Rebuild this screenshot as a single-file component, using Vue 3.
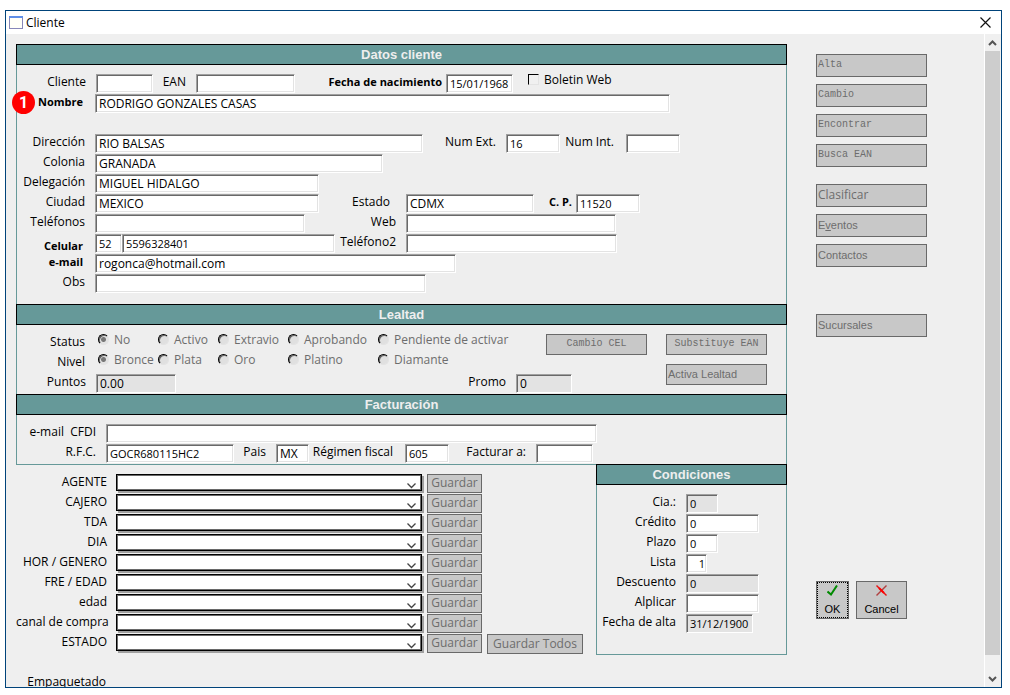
<script setup>
import { ref } from 'vue'

const customerRows = ref([
  { cls: 'r-id', fields: [
    { id: 'cliente', label: 'Cliente', value: '' },
    { id: 'ean', label: 'EAN', value: '' },
    { id: 'nacimiento', label: 'Fecha de nacimiento', value: '15/01/1968', bold: true, near: true, num: true },
  ], check: 'Boletin Web' },
  { cls: 'r-name', badge: '1', fields: [{ id: 'nombre', label: 'Nombre', value: 'RODRIGO GONZALES CASAS', bold: true }] },
  { cls: 'r-blank', fields: [] },
  { cls: 'r-street', fields: [
    { id: 'direccion', label: 'Dirección', value: 'RIO BALSAS' },
    { id: 'numext', label: 'Num Ext.', value: '16', num: true },
    { id: 'numint', label: 'Num Int.', value: '', mid: true },
  ] },
  { cls: 'r-colony', fields: [{ id: 'colonia', label: 'Colonia', value: 'GRANADA' }] },
  { cls: 'r-city', fields: [{ id: 'delegacion', label: 'Delegación', value: 'MIGUEL HIDALGO' }] },
  { cls: 'r-city', fields: [
    { id: 'ciudad', label: 'Ciudad', value: 'MEXICO' },
    { id: 'estado', label: 'Estado', value: 'CDMX', far: true },
    { id: 'cp', label: 'C. P.', value: '11520', bold: true, near: true, num: true },
  ] },
  { cls: 'r-phone', fields: [
    { id: 'telefonos', label: 'Teléfonos', value: '' },
    { id: 'web', label: 'Web', value: '' },
  ] },
  { cls: 'r-cell', fields: [
    { id: 'lada', label: 'Celular', value: '52', bold: true, low: true, num: true },
    { id: 'celular', aria: 'Número celular', value: '5596328401', num: true },
    { id: 'telefono2', label: 'Teléfono2', value: '' },
  ] },
  { cls: 'r-mail', fields: [{ id: 'email', label: 'e-mail', value: 'rogonca@hotmail.com', bold: true }] },
  { cls: 'r-obs', fields: [{ id: 'obs', label: 'Obs', value: '' }] },
])

const radioRows = [
  { name: 'status', label: 'Status', options: ['No', 'Activo', 'Extravio', 'Aprobando', 'Pendiente de activar'] },
  { name: 'nivel', label: 'Nivel', options: ['Bronce', 'Plata', 'Oro', 'Platino', 'Diamante'] },
]

const billingRows = ref([
  { cls: 'r-cfdi', fields: [{ id: 'cfdi', label: 'e-mail  CFDI', value: '' }] },
  { cls: 'r-rfc', fields: [
    { id: 'rfc', label: 'R.F.C.', value: 'GOCR680115HC2', num: true },
    { id: 'pais', label: 'Pais', value: 'MX' },
    { id: 'regimen', label: 'Régimen fiscal', value: '605', mid: true, num: true },
    { id: 'facturar', label: 'Facturar a:', value: '' },
  ] },
])

const conditions = ref([
  { id: 'cia', label: 'Cia.:', value: '0', size: 'w-s', locked: true },
  { id: 'credito', label: 'Crédito', value: '0', size: 'w-l' },
  { id: 'plazo', label: 'Plazo', value: '0', size: 'w-s' },
  { id: 'lista', label: 'Lista', value: '1', size: 'w-xs' },
  { id: 'descuento', label: 'Descuento', value: '0', size: 'w-l', locked: true },
  { id: 'alplicar', label: 'Alplicar', value: '', size: 'w-l' },
  { id: 'alta', label: 'Fecha de alta', value: '31/12/1900', size: 'w-m', locked: true },
])

const categories = ['AGENTE', 'CAJERO', 'TDA', 'DIA', 'HOR / GENERO', 'FRE / EDAD', 'edad', 'canal de compra', 'ESTADO']
</script>

<template>
  <div class="window">
    <header class="titlebar">
      <svg class="app-icon" width="14" height="13" viewBox="0 0 14 13" aria-hidden="true">
        <rect x="0.5" y="0.5" width="13" height="12" fill="#fffff8" stroke="#8787b8" />
        <path d="M0 1h14" stroke="#5f8fe8" stroke-width="2" />
      </svg>
      <h1>Cliente</h1>
      <button class="close" aria-label="Cerrar">
        <svg width="11" height="11" viewBox="0 0 11 11"><path d="M0.5 0.5l10 10M10.5 0.5l-10 10" stroke="#111" stroke-width="1.2" fill="none" /></svg>
      </button>
    </header>

    <div class="content">
      <main class="form">
        <section class="panel">
          <h2>Datos cliente</h2>
          <div class="body customer">
            <div v-for="(row, i) in customerRows" :key="i" class="row" :class="row.cls">
              <template v-for="f in row.fields" :key="f.id">
                <label v-if="f.label" :for="f.id" :class="{ bold: f.bold, near: f.near, mid: f.mid, far: f.far, low: f.low }">{{ f.label }}</label>
                <input :id="f.id" v-model="f.value" type="text" :aria-label="f.aria" :class="{ num: f.num }">
              </template>
              <label v-if="row.check" class="check"><input type="checkbox">{{ row.check }}</label>
              <span v-if="row.badge" class="badge">{{ row.badge }}</span>
            </div>
          </div>
        </section>

        <section class="panel">
          <h2>Lealtad</h2>
          <div class="body loyalty">
            <div class="levels">
              <div v-for="row in radioRows" :key="row.name" class="row r-radio" role="radiogroup" :aria-label="row.label">
                <span class="caption">{{ row.label }}</span>
                <label v-for="(o, i) in row.options" :key="o" class="radio">
                  <input type="radio" :name="row.name" :checked="i === 0" disabled>{{ o }}
                </label>
              </div>
            </div>
            <button class="btn mono change" disabled>Cambio CEL</button>
            <div class="side-actions">
              <button class="btn mono" disabled>Substituye EAN</button>
              <button class="btn sans left" disabled>Activa Lealtad</button>
            </div>
            <div class="row r-points">
              <label for="puntos">Puntos</label>
              <input id="puntos" type="text" value="0.00" readonly class="locked">
              <label for="promo">Promo</label>
              <input id="promo" type="text" value="0" readonly class="locked">
            </div>
          </div>
        </section>

        <section class="panel closed">
          <h2>Facturación</h2>
          <div class="body">
            <div v-for="row in billingRows" :key="row.cls" class="row" :class="row.cls">
              <template v-for="f in row.fields" :key="f.id">
                <label :for="f.id" :class="{ mid: f.mid }">{{ f.label }}</label>
                <input :id="f.id" v-model="f.value" type="text" :class="{ num: f.num }">
              </template>
            </div>
          </div>
        </section>

        <div class="lower">
          <div class="categories">
            <div v-for="(c, i) in categories" :key="c" class="row r-cat">
              <label :for="'cat' + i">{{ c }}</label>
              <span class="combo">
                <select :id="'cat' + i"><option></option></select>
                <svg width="9" height="6" viewBox="0 0 9 6" aria-hidden="true"><path d="M0.5 0.5l4 4 4-4" fill="none" stroke="#444" stroke-width="1.3" /></svg>
              </span>
              <button class="btn" disabled>Guardar</button>
              <button v-if="i === categories.length - 1" class="btn all" disabled>Guardar Todos</button>
            </div>
            <div class="row r-pack"><span class="caption">Empaquetado</span></div>
          </div>

          <section class="panel closed conditions">
            <h2>Condiciones</h2>
            <div class="body">
              <div v-for="f in conditions" :key="f.id" class="row r-cond">
                <label :for="f.id">{{ f.label }}</label>
                <input :id="f.id" v-model="f.value" type="text" class="num" :readonly="f.locked" :class="[f.size, { locked: f.locked }]">
              </div>
            </div>
          </section>
        </div>
      </main>

      <aside class="actions">
        <div class="group">
          <button class="btn mono left" disabled>Alta</button>
          <button class="btn mono left" disabled>Cambio</button>
          <button class="btn mono left" disabled>Encontrar</button>
          <button class="btn mono left" disabled>Busca EAN</button>
        </div>
        <div class="group second">
          <button class="btn left" disabled>Clasificar</button>
          <button class="btn sans left" disabled>E<u>v</u>entos</button>
          <button class="btn sans left" disabled>Contactos</button>
        </div>
        <div class="group third">
          <button class="btn sans left" disabled>Sucursales</button>
        </div>
        <div class="confirm">
          <button class="btn sans ok">
            <svg width="11" height="11" viewBox="0 0 11 11" aria-hidden="true"><path d="M0.5 6.5l3.5 3L10 0.5" fill="none" stroke="#008a00" stroke-width="2" /></svg>
            OK
          </button>
          <button class="btn sans cancel">
            <svg width="11" height="11" viewBox="0 0 11 11" aria-hidden="true"><path d="M0.5 0.5l10 10" stroke="#e81010" stroke-width="1.4" /><path d="M10.5 0.5l-10 10" stroke="#b04040" stroke-width="1.4" /><path d="M3 3l5 5" stroke="#f00" stroke-width="2" /></svg>
            Cancel
          </button>
        </div>
      </aside>

      <div class="scrollbar">
        <button aria-label="Subir"><svg width="9" height="6" viewBox="0 0 9 6"><path d="M1 5l3.5-3.5L8 5" fill="none" stroke="#555" stroke-width="2" /></svg></button>
        <div class="thumb"></div>
        <button class="down" aria-label="Bajar"><svg width="9" height="6" viewBox="0 0 9 6"><path d="M1 1l3.5 3.5L8 1" fill="none" stroke="#555" stroke-width="2" /></svg></button>
      </div>
    </div>
  </div>
</template>

<style>
body {
  background: #fff;
}
</style>

<style scoped>
* {
  box-sizing: border-box;
}
.window {
  display: flex;
  flex-direction: column;
  height: calc(100vh - 17px);
  margin: 10px 8px 7px 5px;
  border: 1px solid #00437a;
  background: #efefef;
  color: #000;
  font: 12px/16px "Open Sans", "Noto Sans", sans-serif;
  overflow: hidden;
}
button, input, select {
  margin: 0;
  font: inherit;
  color: inherit;
}
.titlebar {
  display: flex;
  flex: none;
  align-items: center;
  height: 23px;
  padding: 0 10px 0 3px;
  background: #fff;
}
h1 {
  margin: 0 auto 0 3px;
  font-size: 12px;
  font-weight: 400;
}
.close {
  display: flex;
  padding: 0;
  border: 0;
  background: none;
}
.content {
  display: flex;
  flex: 1;
  min-height: 0;
}
.form {
  flex: 1;
  min-width: 0;
  padding: 10px 0 0 10px;
}
.panel {
  border: solid #669999;
  border-width: 0 1px;
  background: #eee;
}
.closed {
  border-bottom-width: 1px;
}
h2 {
  height: 21px;
  margin: 0 -1px;
  border: 1px solid #000;
  background: #669999;
  color: #eee;
  font: bold 13px/19px "Liberation Sans", Arial, sans-serif;
  text-align: center;
}
.body {
  padding-top: 9px;
}
.customer {
  padding-bottom: 10px;
}
.row {
  display: grid;
  position: relative;
  height: 20px;
  align-items: start;
}
label, .caption {
  padding-right: 10px;
  text-align: right;
  white-space: pre;
}
.bold {
  padding-right: 12px;
  font-size: 11px;
  font-weight: 700;
}
.mid {
  padding-right: 12px;
}
.far {
  padding-right: 16px;
}
.near {
  padding-right: 4px;
}
.low {
  align-self: end;
}
input[type="text"] {
  width: 100%;
  min-width: 0;
  height: 19px;
  padding: 0 1px 0 3px;
  border: 1px solid;
  border-color: #a0a0a0 #fff #fff #a0a0a0;
  border-radius: 0;
  background: #fff;
  box-shadow: inset 1px 1px #696969, inset -1px -1px #e3e3e3;
  outline: none;
}
input[type="text"].num {
  font-size: 11px;
}
input[type="text"].locked {
  background: #e3e3e3;
}
.r-id { grid-template-columns: 79px 57px 43px 99px 151px 67px auto; }
.r-name { grid-template-columns: 78px 575px; }
.r-street { grid-template-columns: 78px 328px 83px 54px 66px 54px; }
.r-colony { grid-template-columns: 78px 288px; }
.r-city { grid-template-columns: 78px 224px 87px 128px 42px 64px; }
.r-phone { grid-template-columns: 78px 210px 101px 210px; }
.r-cell { grid-template-columns: 78px 27px 213px 71px 211px; }
.r-mail { grid-template-columns: 78px 361px; }
.r-obs { grid-template-columns: 78px 331px; }
.r-radio { grid-template-columns: 81px 60px 60px 70px 90px auto; }
.r-points { grid-template-columns: 79px 80px 340px 56px; }
.r-cfdi { grid-template-columns: 89px 491px; }
.r-rfc { grid-template-columns: 89px 128px 42px 33px 96px 44px 87px 57px; }
.r-cond { grid-template-columns: 89px 1fr; }
.r-cat { grid-template-columns: 95px 306px 55px 96px; column-gap: 5px; }
.r-pack { grid-template-columns: 100px; margin-top: 20px; }
.r-cat label { padding-right: 4px; }
.r-radio .caption { padding-right: 13px; }

.check {
  display: flex;
  gap: 5px;
  padding-left: 15px;
  line-height: 12px;
}
.check input {
  width: 11px;
  height: 11px;
  appearance: none;
  border: 1px solid;
  border-color: #000 #e3e3e3 #e3e3e3 #000;
  background: #f0f0f0;
}
.badge {
  position: absolute;
  top: -3px;
  left: -5px;
  width: 23px;
  height: 23px;
  border-radius: 50%;
  background: #f00;
  color: #fff;
  font: bold 16px/23px Roboto, "Liberation Sans", sans-serif;
  text-align: center;
}
.radio {
  display: flex;
  gap: 5px;
  padding: 0;
  color: #6d6d6d;
  line-height: 12px;
}
.radio input {
  width: 11px;
  height: 11px;
  appearance: none;
  border: 1px solid;
  border-color: #000 #e3e3e3 #e3e3e3 #000;
  border-radius: 50%;
  background: #e0e0e0;
  box-shadow: inset 1px 1px #696969;
}
.radio input:checked {
  background: radial-gradient(circle, #777 0 2px, #e3e3e3 3px);
}
.loyalty {
  display: grid;
  grid-template: 40px 20px / 1fr 101px 101px;
  column-gap: 19px;
  padding-right: 19px;
}
.levels {
  grid-area: 1 / 1;
  min-width: 0;
}
.change {
  grid-area: 1 / 2;
}
.side-actions {
  display: grid;
  grid-area: 1 / 3 / 3 / 4;
  align-content: start;
  gap: 9px;
}
.r-points {
  grid-area: 2 / 1 / 3 / 3;
}
.btn {
  height: 21px;
  padding: 0 1px 1px;
  border: 1px solid #696969;
  border-radius: 0;
  background: #c8c8c8;
  color: #6d6d6d;
  line-height: 14px;
  white-space: nowrap;
}
.mono {
  font-family: "Liberation Mono", monospace;
  font-size: 10px;
}
.sans {
  padding-bottom: 2px;
  font-family: "Liberation Sans", Arial, sans-serif;
  font-size: 11px;
}
.left {
  text-align: left;
}
.lower {
  display: flex;
  align-items: flex-start;
}
.categories {
  flex: 1;
  min-width: 0;
  padding-top: 9px;
}
.r-cat .btn {
  height: 19px;
}
.r-cat .all {
  height: 20px;
}
.combo {
  position: relative;
  height: 17px;
  border: 1px solid #000;
  box-shadow: 2px 2px #a0a0a0;
}
.combo select {
  display: block;
  width: 100%;
  height: 15px;
  padding: 0;
  appearance: none;
  border: 1px solid #696969;
  border-radius: 0;
  background: #fff;
}
.combo svg {
  position: absolute;
  right: 5px;
  bottom: 1px;
}
.conditions {
  width: 191px;
  margin-top: -1px;
}
.conditions .body {
  padding-bottom: 20px;
}
.w-xs { max-width: 21px; text-align: right; }
.w-s { max-width: 32px; }
.w-m { max-width: 67px; }
.w-l { max-width: 73px; }

.actions {
  flex: none;
  width: 111px;
  margin: 20px 57px 0 29px;
}
.group {
  display: grid;
  gap: 7px;
}
.group .btn {
  height: 23px;
}
.second {
  margin-top: 17px;
}
.third {
  margin-top: 47px;
}
.confirm {
  display: flex;
  gap: 7px;
  margin-top: 244px;
}
.confirm .btn {
  display: flex;
  flex-direction: column;
  align-items: center;
  justify-content: space-between;
  height: 38px;
  padding: 3px 7px 2px;
  color: #000;
}
.confirm .ok {
  min-width: 33px;
  outline: 1px dotted #000;
  outline-offset: -2px;
}
.confirm .cancel {
  min-width: 51px;
}
.scrollbar {
  display: flex;
  flex: none;
  flex-direction: column;
  width: 17px;
  border-left: 1px solid #fff;
  background: #f0f0f0;
}
.scrollbar button {
  display: grid;
  height: 17px;
  padding: 0 1px 0 0;
  border: 0;
  background: none;
  place-items: center;
}
.scrollbar .down {
  margin-top: 15px;
}
.thumb {
  flex: 1;
  margin-right: 1px;
  background: #cdcdcd;
}
</style>
